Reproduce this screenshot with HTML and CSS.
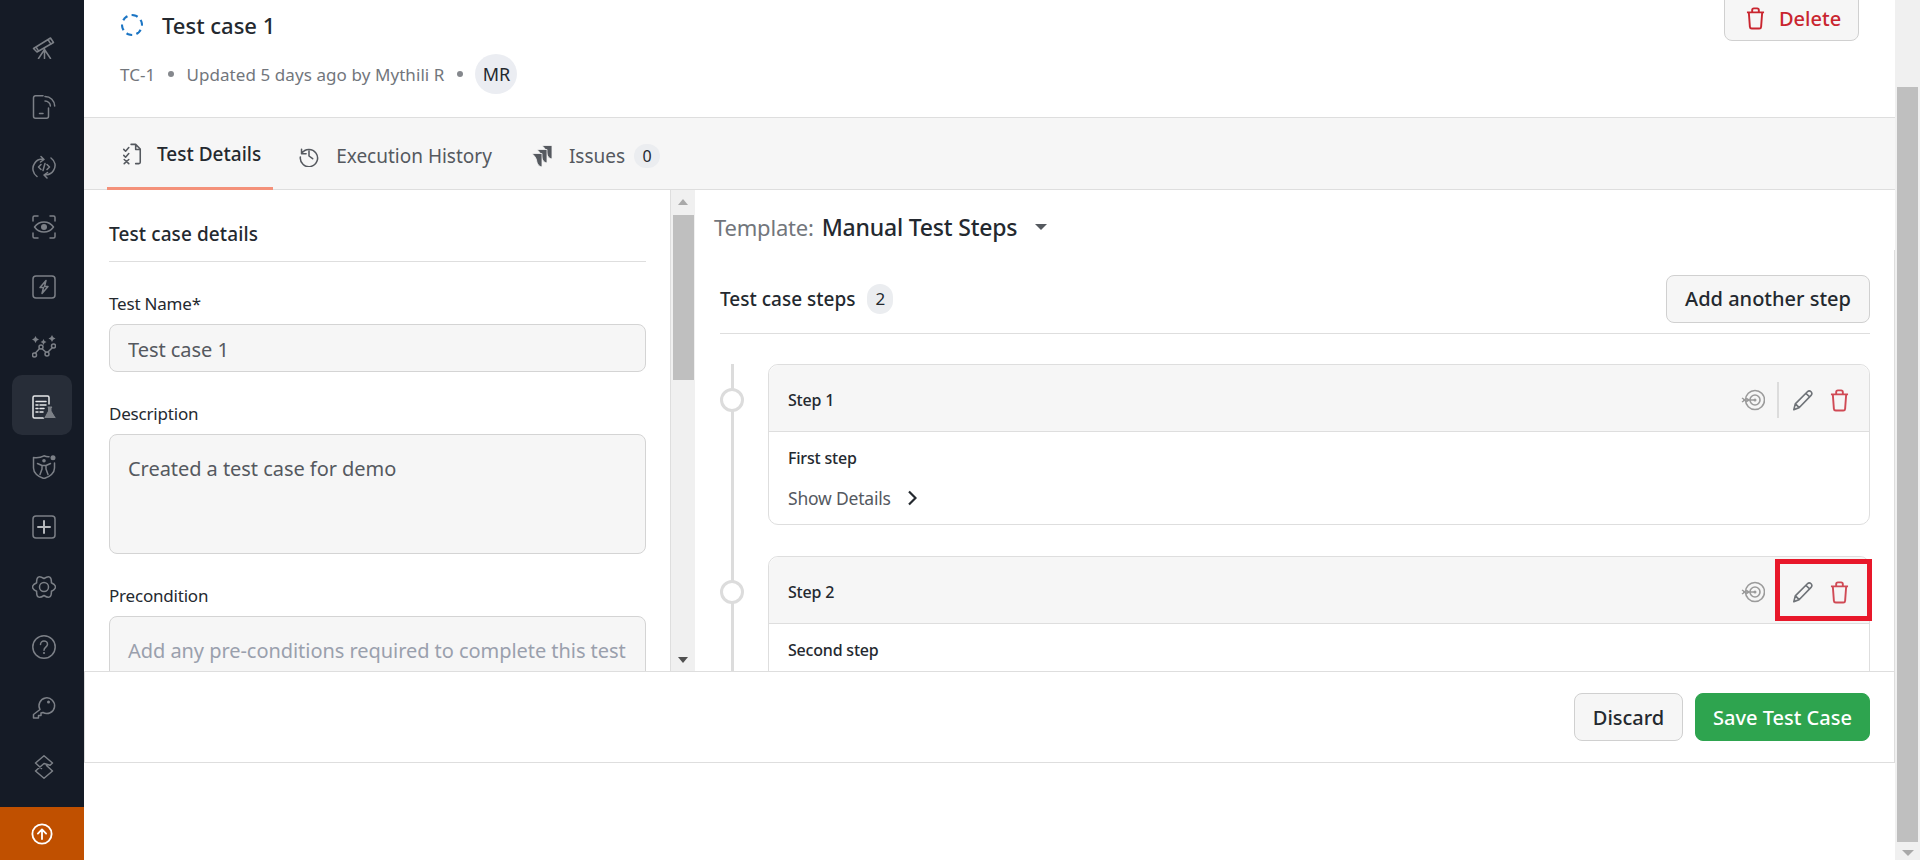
FILE: index.html
```html
<!DOCTYPE html>
<html lang="en">
<head>
  <meta charset="UTF-8">
  <title>Test case 1</title>
  <link rel="stylesheet" href="styles.css">
</head>
<body>

  <svg class="defs" width="0" height="0">
    <symbol id="trash" viewBox="0 0 20 24">
      <path d="M1 5.5h18M6.5 5V3.2C6.5 2 7.3 1.3 8.3 1.3h3.4c1 0 1.800.7 1.800 1.900V5M3 6l1.100 14.800c.1 1.100.8 1.800 1.900 1.800h8c1.100 0 1.800-.7 1.900-1.800L17 6" fill="none" stroke="currentColor" stroke-width="2" stroke-linejoin="round"/>
    </symbol>
    <symbol id="pencil" viewBox="0 0 24 24">
      <path d="M2 22.5l1.600-6.300L16.800 3c1.200-1.200 2.800-1.200 4 0s1.200 2.800 0 4L7.700 20.500zM3.800 16.200l4 4.100M15.200 4.700l4.100 4" fill="none" stroke="currentColor" stroke-width="1.800" stroke-linejoin="round"/>
    </symbol>
    <symbol id="target" viewBox="0 0 24 22">
      <g fill="none" stroke="currentColor">
        <circle cx="14" cy="11" r="9.5" stroke-width="1.600"/>
        <circle cx="14" cy="11" r="5" stroke-width="1.600"/>
      </g>
      <circle cx="14" cy="11" r="1.5" fill="currentColor"/>
      <path d="M1 9l3 2-3 2M5 9l3 2-3 2M2 11h12" fill="none" stroke="currentColor" stroke-width="1.500"/>
    </symbol>
  </svg>

  <nav class="sidebar">
    <div class="nav-items">
      <a class="nav-item"><svg viewBox="0 0 24 24"><path d="M1.5 13.5L18.500 3l3 4.500L5 17zM16 4.500l3 4.800M4 12l2.600 4.200M12.500 13.500v10M12.500 14.500L6.500 23.500M12.500 14.500l6 9"/></svg></a>
      <a class="nav-item"><svg viewBox="0 0 24 24"><path d="M11 .8H3.500a2 2 0 0 0-2 2v18.400a2 2 0 0 0 2 2h11a2 2 0 0 0 2-2V13M7.500 18.500h3.500M13 1.500c5.500 0 9.500 4 9.700 9.500M13 6c3 0 5.300 2.300 5.400 5"/></svg></a>
      <a class="nav-item"><svg viewBox="0 0 24 24"><path d="M5 21.500C1 18.500-.5 13 2.500 8.500 4.500 5.300 8 4 11 4.500M19 3c4 3 5.500 8 2.500 12.500-2 3.200-5.500 4.500-8.500 4M9 1.500l3 3-3.500 2.500M15 23l-3-3 3.500-2.500M9 9.500L6.500 12 9 14.500M15 9.500l2.500 2.500-2.500 2.500M13 8.500l-2 7"/></svg></a>
      <a class="nav-item"><svg viewBox="0 0 24 24"><path d="M1 6V2.500C1 1.700 1.700 1 2.500 1H6M18 1h3.500c.8 0 1.500.7 1.500 1.500V6M1 18v3.500c0 .8.700 1.500 1.500 1.500H6M18 23h3.500c.8 0 1.500-.7 1.500-1.500V18M2.500 12C5 8.500 8.500 7 12 7s7 1.500 9.500 5c-2.500 3.500-6 5-9.500 5s-7-1.500-9.500-5z"/><circle class="solid" cx="12" cy="12" r="3"/></svg></a>
      <a class="nav-item"><svg viewBox="0 0 24 24"><rect x="1" y="1" width="22" height="22" rx="3"/><path d="M14 5.500L8 12.500h3.500L10 18.500l6-7h-3.500z"/></svg></a>
      <a class="nav-item"><svg viewBox="0 0 24 24"><path d="M3 18.500L8.500 12.500l6.500 5.500 6-6"/><circle cx="2.500" cy="20" r="2" class="dark"/><circle cx="9" cy="12" r="2" class="dark"/><circle cx="15" cy="19" r="2" class="dark"/><circle cx="21.500" cy="11" r="2" class="dark"/><path class="solid" d="M3.500 1l1.200 2.300L7 4.500 4.700 5.700 3.500 8 2.300 5.700 0 4.500l2.300-1.200zM11.500 4l1 2 2 1-2 1-1 2-1-2-2-1 2-1zM20 0l1.200 2.300 2.300 1.200-2.300 1.200L20 7l-1.200-2.300-2.300-1.200 2.300-1.200z"/></svg></a>
      <a class="nav-item active"><svg viewBox="0 0 24 24"><path d="M17 9V2.500C17 1.700 16.300 1 15.500 1h-13C1.700 1 1 1.700 1 2.500v19c0 .8.700 1.500 1.500 1.500H12M4 6.500h10M4 10h2M8 10h6M4 13.500h2M8 13.500h4M4 17h2M8 17h3"/><path class="flask" d="M15.500 11h5v1.500l-.5.500v3l4 6.500c.2.500-.1 1-.7 1H12.700c-.6 0-.9-.5-.7-1l3.500-6.500v-3l-.3-.5z"/></svg></a>
      <a class="nav-item"><svg viewBox="0 0 24 24"><path d="M17 1.800C15 2 13.500 1.500 12 .8 9 2.500 5 3 1.500 2.500V13c0 5 4.500 9 10.500 10.500 6-1.500 10.500-5.500 10.500-10.500V8"/><circle class="solid" cx="12" cy="5.800" r="1.800"/><path d="M5.500 8.500L10 10.500h4l4.500-2M10 10.500v3.500l-2 5.500M14 10.500v3.500l2 5.500"/><circle cx="21" cy="2.800" r="2.500" class="solid"/></svg></a>
      <a class="nav-item"><svg viewBox="0 0 24 24"><rect x="1" y="1" width="22" height="22" rx="3"/><path class="bright" d="M12 6v12M6 12h12"/></svg></a>
      <a class="nav-item"><svg viewBox="0 0 24 24"><circle cx="12" cy="12" r="4.500"/><path d="M12 3.500Q19.800-1.500 19.400 7.750 27.600 12 19.400 16.250 19.800 25.500 12 20.500 4.200 25.500 4.640 16.250-3.600 12 4.640 7.750 4.200-1.500 12 3.500z"/></svg></a>
      <a class="nav-item"><svg viewBox="0 0 24 24"><circle cx="12" cy="12" r="11.200"/><path d="M8.500 9.500c0-2 1.600-3.500 3.500-3.500s3.500 1.400 3.500 3.200c0 2.800-3.500 3-3.500 6"/><circle class="solid" cx="12" cy="18" r="1.100"/></svg></a>
      <a class="nav-item"><svg viewBox="0 0 24 24"><path d="M8 14.500a7.800 7.800 0 1 1 3 3l-2 .5v2.500H6.500V23H1.500v-3.500z"/><circle class="solid" cx="16.500" cy="7" r="1.500"/></svg></a>
      <a class="nav-item"><svg viewBox="0 0 24 24"><path d="M9.500 13.500L3.500 8 12 .8 20.500 8l-2.500 2.300M14.500 10.500l6 5.500L12 23.200 3.500 16l2.500-2.300M6 13.700L12 8.500l6 1.800"/></svg></a>
    </div>
    <a class="upgrade">
      <svg viewBox="0 0 24 24"><circle cx="12" cy="12" r="10.500"/><path d="M12 17.500V7M7.500 11.500L12 7l4.500 4.500"/></svg>
    </a>
  </nav>

  <div class="main">
    <header class="page-head">
      <div>
        <div class="title-row">
          <span class="spinner"></span>
          <h1>Test case 1</h1>
        </div>
        <div class="meta">
          <span>TC-1</span>
          <i class="dot"></i>
          <span>Updated 5 days ago by Mythili R</span>
          <i class="dot"></i>
          <span class="avatar">MR</span>
        </div>
      </div>
      <button class="btn btn-delete"><svg class="icon-trash"><use href="#trash"/></svg>Delete</button>
    </header>

    <div class="tabs">
      <a class="tab tab-on">
        <svg viewBox="0 0 20 24"><path d="M9 1.500h5l5 5V21a1.500 1.500 0 0 1-1.500 1.500H14M14 1.500V7h5M1 7l2 2 3.500-4M1 13.500l2 2 3.500-4M1.500 18l5 4.500M6.500 18l-5 4.500"/></svg>
        Test Details
      </a>
      <a class="tab">
        <svg viewBox="0 0 22 22"><path d="M2.800 3.500v5h5M3 8a9.500 9.500 0 1 1-1.500 4M11 5.500V11l4 3"/></svg>
        Execution History
      </a>
      <a class="tab">
        <svg class="jira" viewBox="0 0 24 24">
          <path d="M12 1.500H22V15C18 14 17 11 16.500 8 16 5.500 14 3.500 12 1.500z"/>
          <path transform="translate(-5 4)" d="M12 1.500H22V15C18 14 17 11 16.500 8 16 5.500 14 3.500 12 1.500z"/>
          <path transform="translate(-10 8)" d="M12 1.500H22V15C18 14 17 11 16.500 8 16 5.500 14 3.500 12 1.500z"/>
        </svg>
        Issues
        <span class="count">0</span>
      </a>
    </div>

    <div class="content">
      <section class="details">
        <h3>Test case details</h3>
        <label class="field-label" for="testName">Test Name*</label>
        <input class="field" id="testName" type="text" value="Test case 1">
        <label class="field-label" for="description">Description</label>
        <textarea class="field field-area" id="description">Created a test case for demo</textarea>
        <label class="field-label" for="precondition">Precondition</label>
        <textarea class="field field-area" id="precondition" placeholder="Add any pre-conditions required to complete this test"></textarea>
      </section>

      <div class="scrollbar scrollbar-inner">
        <span class="arrow-up"></span>
        <span class="thumb"></span>
        <span class="spacer"></span>
        <span class="arrow-down"></span>
      </div>

      <section class="steps-pane">
        <div class="template">
          <span class="template-label">Template:</span>
          <strong>Manual Test Steps</strong>
          <span class="caret"></span>
        </div>

        <div class="steps-head">
          <h3>Test case steps</h3>
          <span class="count count-big">2</span>
          <button class="btn btn-add">Add another step</button>
        </div>

        <div class="steps">
          <div class="step">
            <span class="step-dot"></span>
            <div class="step-card">
              <div class="step-top">
                <span>Step 1</span>
                <div class="step-actions">
                  <svg class="icon-target"><use href="#target"/></svg>
                  <span class="sep"></span>
                  <svg class="icon-pencil"><use href="#pencil"/></svg>
                  <svg class="icon-trash-sm"><use href="#trash"/></svg>
                </div>
              </div>
              <div class="step-body">
                <p>First step</p>
                <a class="show-more">Show Details
                  <svg viewBox="0 0 10 16"><path d="M2 1.500L8.500 8 2 14.500"/></svg>
                </a>
              </div>
            </div>
          </div>

          <div class="step">
            <span class="step-dot"></span>
            <div class="step-card">
              <div class="step-top">
                <span>Step 2</span>
                <div class="step-actions">
                  <svg class="icon-target"><use href="#target"/></svg>
                  <span class="sep sep-off"></span>
                  <svg class="icon-pencil"><use href="#pencil"/></svg>
                  <svg class="icon-trash-sm"><use href="#trash"/></svg>
                </div>
                <span class="highlight"></span>
              </div>
              <div class="step-body">
                <p>Second step</p>
              </div>
            </div>
          </div>
        </div>
      </section>

      <span class="edge"></span>
    </div>

    <footer class="actions">
      <button class="btn btn-discard">Discard</button>
      <button class="btn btn-save">Save Test Case</button>
    </footer>
  </div>

  <div class="scrollbar scrollbar-page">
    <span class="thumb"></span>
    <span class="arrow-down"></span>
  </div>

</body>
</html>
```

FILE: styles.css
```css
* {
  box-sizing: border-box;
}

html, body {
  height: 100%;
}

body {
  margin: 0;
  display: flex;
  height: 860px;
  overflow: hidden;
  background-color: #ffffff;
  color: #24292f;
  font-family: "Noto Sans", "Open Sans", Arial, sans-serif;
  font-size: 16px;
}

.defs {
  position: absolute;
}

button {
  font-family: inherit;
  cursor: pointer;
}

h1, h3, p {
  margin: 0;
}

/* sidebar */
.sidebar {
  width: 84px;
  flex: none;
  display: flex;
  flex-direction: column;
  background-color: #151b26;
}

.nav-items {
  flex: 1;
  padding-top: 15px;
}

.nav-item {
  display: flex;
  align-items: center;
  justify-content: center;
  width: 60px;
  height: 60px;
  margin-left: 12px;
  padding: 4px 0 0 4px;
  border-radius: 10px;
}

.nav-item svg {
  width: 24px;
  height: 24px;
  fill: none;
  stroke: #7c8087;
  stroke-width: 1.5;
  stroke-linejoin: round;
  stroke-linecap: round;
}

.nav-item .solid {
  fill: #7c8087;
  stroke: none;
}

.nav-item .dark {
  fill: #151b26;
}

.nav-item .bright {
  stroke: #b4b7bb;
  stroke-width: 2;
}

.nav-item.active {
  background-color: #272d38;
}

.nav-item.active svg {
  stroke: #e6e7e9;
}

.nav-item.active .flask {
  fill: #7c8087;
  stroke: #272d38;
  stroke-width: 1;
}

.upgrade {
  height: 53px;
  flex: none;
  display: flex;
  align-items: center;
  justify-content: center;
  background-color: #c05000;
}

.upgrade svg {
  width: 22px;
  height: 22px;
  fill: none;
  stroke: #ffffff;
  stroke-width: 2;
  stroke-linecap: round;
  stroke-linejoin: round;
}

/* main column */
.main {
  width: 1811px;
  flex: none;
  display: flex;
  flex-direction: column;
}

.page-head {
  height: 118px;
  flex: none;
  display: flex;
  justify-content: space-between;
  align-items: flex-start;
  padding: 0 36px;
  border-bottom: 1px solid #dedede;
}

.title-row {
  display: flex;
  align-items: center;
  height: 26px;
  margin-top: 12px;
}

.spinner {
  width: 22px;
  height: 22px;
  margin-left: 1px;
  border: 2px dashed #1b75c4;
  border-radius: 50%;
}

h1 {
  margin-left: 19px;
  font-size: 22px;
  font-weight: 500;
  line-height: 26px;
}

.meta {
  display: flex;
  align-items: center;
  margin-top: 16px;
  color: #72767c;
  font-size: 17px;
  letter-spacing: 0.08px;
}

.dot {
  width: 6px;
  height: 6px;
  margin: 0 12px 0 13px;
  border-radius: 50%;
  background-color: #85888d;
}

.avatar {
  width: 42px;
  height: 40px;
  display: flex;
  align-items: center;
  justify-content: center;
  border-radius: 50%;
  background-color: #ebedf2;
  color: #24292f;
  font-size: 18px;
  letter-spacing: 0;
}

.btn {
  border: 1px solid #d0d0d0;
  border-radius: 8px;
  background-color: #f6f6f6;
  color: #24292f;
  font-size: 20px;
  font-weight: 500;
}

.btn-delete {
  display: flex;
  align-items: center;
  width: 135px;
  height: 52px;
  margin-top: -11px;
  padding: 7px 0 0 21px;
  color: #c9252f;
}

.icon-trash {
  width: 19px;
  height: 23px;
  margin-right: 14px;
}

/* tabs */
.tabs {
  height: 72px;
  flex: none;
  display: flex;
  align-items: stretch;
  padding-left: 23px;
  background-color: #f6f6f6;
  border-bottom: 1px solid #dedede;
}

.tab {
  display: flex;
  align-items: center;
  height: 72px;
  padding: 3px 12px 0 15px;
  margin-right: 11px;
  color: #55595f;
  font-size: 19px;
}

.tab svg {
  width: 20px;
  height: 22px;
  margin-right: 17px;
  fill: none;
  stroke: #55595f;
  stroke-width: 1.7;
  stroke-linecap: round;
  stroke-linejoin: round;
}

.tab svg.jira {
  width: 24px;
  height: 24px;
  margin-right: 15px;
  fill: #55595f;
  stroke: #f6f6f6;
  stroke-width: 0.8;
}

.tab-on {
  color: #24292f;
  font-weight: 500;
  border-bottom: 3px solid #f4917a;
}

.tab-on svg {
  margin-right: 15px;
}

.count {
  display: inline-flex;
  align-items: center;
  justify-content: center;
  width: 26px;
  height: 24px;
  margin-left: 9px;
  border-radius: 12px;
  background-color: #ebedf0;
  font-size: 16px;
  color: #24292f;
}

/* content */
.content {
  height: 482px;
  flex: none;
  display: flex;
  overflow: hidden;
  border-bottom: 1px solid #dedede;
}

.details {
  width: 586px;
  flex: none;
  padding: 0 24px 0 25px;
  overflow: hidden;
}

.details h3 {
  height: 72px;
  padding-top: 31px;
  border-bottom: 1px solid #dedede;
  font-size: 19px;
  font-weight: 500;
  letter-spacing: 0.1px;
}

.field-label {
  display: block;
  margin: 30px 0 8px;
  font-size: 17px;
  line-height: 24px;
  letter-spacing: -0.2px;
}

.field {
  display: block;
  width: 100%;
  height: 48px;
  padding: 2px 8px 0 18px;
  border: 1px solid #d4d4d4;
  border-radius: 8px;
  background-color: #f6f6f6;
  color: #55595f;
  font-family: inherit;
  font-size: 20px;
  letter-spacing: -0.05px;
  resize: none;
}

.field-area {
  height: 120px;
  padding-top: 21px;
  line-height: 26px;
}

.field::placeholder {
  color: #9aa0ad;
}

.scrollbar {
  width: 25px;
  flex: none;
  display: flex;
  flex-direction: column;
  align-items: center;
  background-color: #f0f0f0;
}

.scrollbar .thumb {
  display: block;
  width: 21px;
  background-color: #bfbfbf;
}

.scrollbar-inner {
  border-left: 1px solid #dedede;
}

.scrollbar-inner .thumb {
  height: 165px;
  margin-top: 10px;
}

.arrow-up {
  width: 0;
  height: 0;
  margin-top: 9px;
  border-left: 5px solid transparent;
  border-right: 5px solid transparent;
  border-bottom: 6px solid #a9a9a9;
}

.arrow-down {
  width: 0;
  height: 0;
  border-left: 5px solid transparent;
  border-right: 5px solid transparent;
  border-top: 6px solid #505050;
}

.spacer {
  flex: 1;
}

.scrollbar-inner .arrow-down {
  margin-bottom: 8px;
}

.scrollbar-page .thumb {
  height: 755px;
  margin-top: 87px;
}

.scrollbar-page .arrow-down {
  margin-top: 8px;
  border-top-color: #a9a9a9;
  border-left-width: 6px;
  border-right-width: 6px;
}

/* steps */
.steps-pane {
  flex: 1;
  min-width: 0;
  padding: 0 24px 0 25px;
  overflow: hidden;
}

.template {
  display: flex;
  align-items: center;
  height: 74px;
  margin-left: -6px;
  margin-bottom: 2px;
  font-size: 22px;
  letter-spacing: -0.2px;
}

.template-label {
  color: #72767c;
  margin-right: 8px;
}

.template strong {
  font-size: 23px;
  font-weight: 500;
}

.caret {
  width: 0;
  height: 0;
  margin-left: 18px;
  border-left: 6px solid transparent;
  border-right: 6px solid transparent;
  border-top: 6px solid #55595f;
}

.steps-head {
  display: flex;
  align-items: center;
  height: 68px;
  padding-bottom: 2px;
  border-bottom: 1px solid #dedede;
}

.steps-head h3 {
  font-size: 19px;
  font-weight: 500;
}

.count-big {
  height: 30px;
  margin-left: 12px;
  font-size: 17px;
  border-radius: 15px;
}

.btn-add {
  width: 204px;
  height: 48px;
  margin-left: auto;
}

.steps {
  padding-top: 30px;
}

.step {
  display: flex;
  align-items: flex-start;
  margin-bottom: 31px;
  background: linear-gradient(#dcdcdc, #dcdcdc) 11px 0 / 3px 300px no-repeat;
}

.step-dot {
  width: 24px;
  height: 24px;
  flex: none;
  margin-top: 24px;
  margin-right: 24px;
  border: 3px solid #dcdcdc;
  border-radius: 50%;
  background-color: #ffffff;
}

.step:first-child {
  margin-bottom: 0;
  padding-bottom: 31px;
}

.step-card {
  flex: 1;
  min-width: 0;
  border: 1px solid #dedede;
  border-radius: 10px;
  background-color: #ffffff;
}

.step-top {
  position: relative;
  display: flex;
  align-items: center;
  justify-content: space-between;
  height: 67px;
  padding: 4px 19px 0;
  border-radius: 10px 10px 0 0;
  background-color: #f6f6f6;
  border-bottom: 1px solid #dedede;
  font-size: 16px;
  font-weight: 500;
  letter-spacing: -0.2px;
}

.step-actions {
  display: flex;
  align-items: center;
  color: #6f7378;
}

.icon-target {
  width: 24px;
  height: 22px;
  margin-right: 12px;
  color: #9b9b9b;
}

.sep {
  width: 2px;
  height: 36px;
  margin-right: 13px;
  background-color: #dcdcdc;
}

.sep-off {
  background-color: transparent;
}

.icon-pencil {
  width: 22px;
  height: 22px;
  margin-right: 16px;
}

.icon-trash-sm {
  width: 19px;
  height: 23px;
  color: #d04a55;
  margin-right: 1px;
}

/* red marker drawn over the step 2 actions */
.highlight {
  position: absolute;
  top: 2px;
  right: -3px;
  width: 97px;
  height: 62px;
  border: 5px solid #e8182a;
}

.step-body {
  height: 92px;
  padding: 14px 19px 0;
  font-size: 16px;
  font-weight: 500;
  letter-spacing: -0.2px;
}

.step-body p {
  line-height: 24px;
}

.show-more {
  display: flex;
  align-items: center;
  margin-top: 16px;
  line-height: 24px;
  color: #55595f;
  font-size: 17.5px;
  font-weight: 400;
}

.show-more svg {
  width: 10px;
  height: 16px;
  margin-left: 16px;
  fill: none;
  stroke: #24292f;
  stroke-width: 2.2;
}

.edge {
  width: 1px;
  flex: none;
  margin-top: 60px;
  background-color: #dedede;
}

/* footer */
.actions {
  height: 91px;
  flex: none;
  display: flex;
  justify-content: flex-end;
  align-items: flex-start;
  gap: 12px;
  padding: 21px 24px 0 0;
  border-bottom: 1px solid #dedede;
  border-right: 1px solid #dedede;
  border-left: 1px solid #dedede;
}

.btn-discard {
  width: 109px;
  height: 48px;
}

.btn-save {
  width: 175px;
  height: 48px;
  border-color: #2ea44f;
  background-color: #2ea44f;
  color: #ffffff;
}
```
